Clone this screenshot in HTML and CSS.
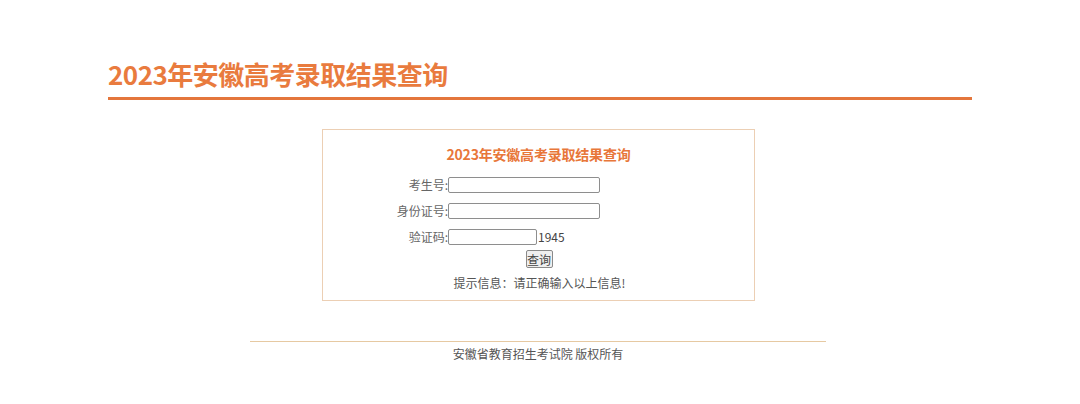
FILE: index.html
```html
<!DOCTYPE html>
<html lang="zh-CN">
<head>
<meta charset="utf-8">
<title>2023年安徽高考录取结果查询</title>
<link rel="stylesheet" href="styles.css">
</head>
<body>
<div class="page">
  <div class="header">
    <h1 class="site-title">2023年安徽高考录取结果查询</h1>
  </div>
  <div class="query-box">
    <h2 class="box-title">2023年安徽高考录取结果查询</h2>
    <div class="row">
      <label class="label">考生号:</label>
      <input class="field" type="text">
    </div>
    <div class="row">
      <label class="label">身份证号:</label>
      <input class="field" type="text">
    </div>
    <div class="row">
      <label class="label">验证码:</label>
      <input class="field short" type="text"><span class="code">1945</span>
    </div>
    <div class="btn-row">
      <button class="btn" type="button">查询</button>
    </div>
    <p class="hint">提示信息：请正确输入以上信息!</p>
  </div>
  <div class="footer">安徽省教育招生考试院 版权所有</div>
</div>
</body>
</html>
```
FILE: styles.css
```css
html, body {
  margin: 0;
  padding: 0;
  background: #ffffff;
}
body {
  font-family: "Noto Sans CJK SC", "Noto Sans", sans-serif;
  color: #555;
}
.page {
  display: flex;
  flex-direction: column;
  align-items: center;
}
.header {
  width: 864px;
  margin-top: 56px;
  padding-bottom: 5px;
  border-bottom: 3px solid #e4763c;
}
.site-title {
  margin: 0;
  font-size: 26px;
  line-height: 36px;
  font-weight: bold;
  color: #e97b3e;
  letter-spacing: -0.5px;
}
.query-box {
  box-sizing: border-box;
  width: 433px;
  margin-top: 29px;
  margin-left: -3px;
  height: 172px;
  border: 1px solid #eccfb4;
  padding-top: 14px;
  display: flex;
  flex-direction: column;
}
.box-title {
  margin: 0;
  text-align: center;
  font-size: 14px;
  line-height: 20px;
  font-weight: bold;
  color: #e8773a;
  letter-spacing: -0.2px;
}
.row {
  display: flex;
  align-items: center;
  height: 17px;
  margin-top: 9px;
  font-size: 12px;
}
.row:first-of-type {
  margin-top: 12px;
}
.label {
  width: 125px;
  text-align: right;
  color: #666;
  line-height: 17px;
  white-space: nowrap;
}
.field {
  box-sizing: border-box;
  width: 152px;
  height: 16px;
  margin: 0;
  padding: 0 2px;
  border: 1px solid #8e8e8e;
  border-radius: 2px;
  background: #fff;
}
.field.short {
  width: 89px;
}
.code {
  color: #444;
  font-size: 12px;
  margin-left: 1px;
}
.btn-row {
  display: flex;
  justify-content: center;
  margin-top: 5px;
  padding-left: 1px;
}
.btn {
  box-sizing: border-box;
  height: 18px;
  width: 27px;
  padding: 0;
  margin: 0;
  font-family: "Noto Sans CJK SC", sans-serif;
  font-size: 12px;
  line-height: 15px;
  color: #444;
  background: #efefef;
  border: 1px solid #8a8a8a;
  border-radius: 2px;
}
.hint {
  margin: 7px 0 0;
  text-align: center;
  font-size: 12px;
  line-height: 16px;
  color: #555;
  padding-left: 2px;
}
.footer {
  width: 576px;
  margin-top: 40px;
  margin-left: -4px;
  border-top: 1px solid #e6c9a2;
  padding-top: 4px;
  text-align: center;
  font-size: 12px;
  line-height: 16px;
  color: #555;
}
```
